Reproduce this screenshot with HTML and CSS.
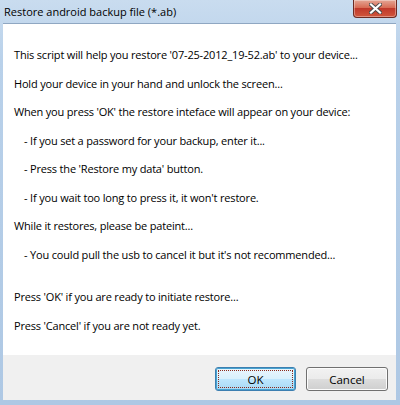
FILE: index.html
```html
<!DOCTYPE html>
<html lang="en">
<head>
  <meta charset="UTF-8">
  <title>Restore android backup file (*.ab)</title>
  <link rel="stylesheet" href="styles.css">
</head>
<body>

  <div class="window">

    <div class="titlebar">
      <span class="title">Restore android backup file (*.ab)</span>
      <button class="close" type="button" aria-label="Close">
        <svg width="13" height="11" viewBox="0 0 13 11">
          <path d="M2 1.5 L11 9.5 M11 1.5 L2 9.5" stroke="#4a4a4a" stroke-width="4" stroke-linecap="square"/>
          <path d="M2 1.5 L11 9.5 M11 1.5 L2 9.5" stroke="#ffffff" stroke-width="2.2" stroke-linecap="square"/>
        </svg>
      </button>
    </div>

    <div class="client">
      <div class="content">
        <p>This script will help you restore '07-25-2012_19-52.ab' to your device...</p>
        <p>Hold your device in your hand and unlock the screen...</p>
        <p>When you press 'OK' the restore inteface will appear on your device:</p>
        <p class="indent">- If you set a password for your backup, enter it...</p>
        <p class="indent">- Press the 'Restore my data' button.</p>
        <p class="indent">- If you wait too long to press it, it won't restore.</p>
        <p>While it restores, please be pateint...</p>
        <p class="indent">- You could pull the usb to cancel it but it's not recommended...</p>
        <p class="gap">Press 'OK' if you are ready to initiate restore...</p>
        <p>Press 'Cancel' if you are not ready yet.</p>
      </div>

      <div class="buttons">
        <button class="btn btn-default" type="button"><span class="focus">OK</span></button>
        <button class="btn" type="button">Cancel</button>
      </div>
    </div>

  </div>

</body>
</html>
```

FILE: styles.css
```css
body { margin: 0; font-family: "Open Sans", "Noto Sans", sans-serif; font-size: 11px; color: #000; }
.window { width: 400px; height: 405px; display: flex; flex-direction: column; background: linear-gradient(#c9dcef, #b9d1ea 60px, #aec8e4); box-sizing: border-box; }

.titlebar { height: 23px; display: flex; justify-content: space-between; align-items: flex-start; flex-shrink: 0; }
.title { padding: 4px 0 0 4px; line-height: 16px; font-size: 11px; }
.close { width: 44px; height: 18px; margin-right: 3px; padding: 0; border: 1px solid #6b2b23; border-top: none; border-radius: 0 0 4px 4px; background: linear-gradient(#e4a695, #d86c55 45%, #c0392b 50%, #d0563c); display: flex; align-items: center; justify-content: center; box-shadow: inset 0 0 0 1px rgba(255,255,255,0.35); }

.client { flex: 1; display: flex; flex-direction: column; margin: 0 4px 5px 3px; border: 1px solid #8fa7c2; border-width: 1px 0 0 0; }
.content { flex: 1; background: #fff; padding: 23px 0 0 11px; }
.content p { margin: 0 0 13.5px; line-height: 15px; white-space: nowrap; letter-spacing: -0.18px; }
.content p.indent { padding-left: 10px; }
.content p.gap { margin-top: 27.5px; }

.buttons { height: 45px; background: #f0f0f0; display: flex; justify-content: flex-end; align-items: flex-start; padding: 12px 8px 0 0; box-sizing: border-box; gap: 10px; }
.btn { width: 82px; height: 24px; padding: 2px; font: inherit; font-size: 11.5px; color: #000; border: 1px solid #707070; border-radius: 3px; background: linear-gradient(#f2f2f2, #ebebeb 50%, #dddddd 50%, #cfcfcf); box-shadow: inset 0 0 0 1px #fcfcfc; }
.btn-default { width: 81px; border-color: #3c7fb1; background: linear-gradient(#eaf6fd, #d9f0fc 50%, #bee6fd 50%, #a7d9f5); box-shadow: inset 0 0 0 1px #48a2cf; }
.focus { display: block; height: 18px; line-height: 17px; border: 1px dotted #8a2a1c; box-sizing: border-box; }
```
